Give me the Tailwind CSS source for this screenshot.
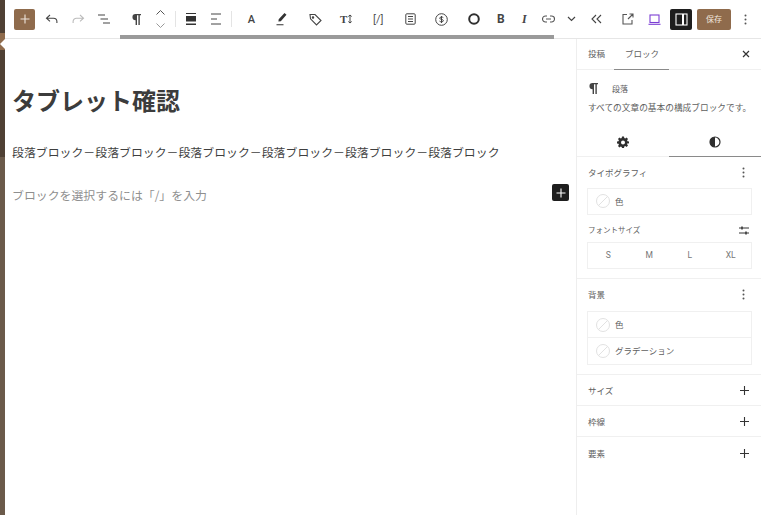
<!DOCTYPE html>
<html lang="ja">
<head>
    <meta charset="UTF-8">
    <meta name="viewport" content="width=device-width, initial-scale=1.0">
    <title>タブレット確認</title>
    <script src="https://cdn.jsdelivr.net/npm/@tailwindcss/browser@4"></script>
</head>
<body class="overflow-hidden bg-white">
<div class="relative flex h-[515px] w-[761px] font-['Noto_Sans_CJK_JP','Noto_Sans',sans-serif] text-[#3a3a3a] antialiased">
    <!-- admin menu strip -->
    <div class="relative flex h-full w-[5px] shrink-0 flex-col">
        <div class="h-[157px] bg-[#4f4034]"></div>
        <div class="flex-1 bg-[#6b5a4a]"></div>
        <div class="absolute left-0 top-[33px] h-[17px] w-[5px] bg-[#8f6b4c]"></div>
        <div class="absolute left-0 top-[44px] h-0 w-0 -translate-y-1/2 border-y-[5px] border-r-[5px] border-y-transparent border-r-white"></div>
    </div>

    <div class="flex min-w-0 flex-1 flex-col">
        <!-- toolbar -->
        <div class="relative flex h-[39px] items-center border-b border-[#e6e6e6] text-[#3a3a3a]">
            <button class="ml-[9px] flex h-[21px] w-[21px] items-center justify-center rounded-[2px] bg-[#8f6b4c]">
                <svg width="10" height="10" viewBox="0 0 10 10" fill="none" stroke="#efe6dd" stroke-width="1.1"><path d="M5 .5v9M.5 5h9"/></svg>
            </button>
            <svg class="ml-[10px]" width="14" height="12" viewBox="0 0 14 12" fill="none" stroke="#444" stroke-width="1.100"><path d="M5 2 1.500 5.200 5 8.400M1.500 5.200h7a3.400 3.400 0 0 1 3.400 3.400V10"/></svg>
            <svg class="ml-[12px]" width="14" height="12" viewBox="0 0 14 12" fill="none" stroke="#bbb" stroke-width="1.100"><path d="M9 2l3.500 3.200L9 8.400M12.500 5.200h-7a3.400 3.400 0 0 0-3.400 3.400V10"/></svg>
            <svg class="ml-[12px]" width="14" height="12" viewBox="0 0 14 12" fill="none" stroke="#444" stroke-width="1.100"><path d="M1 2h7M3.500 6h7.500M6 10h7"/></svg>

            <svg class="ml-[20px]" width="11" height="13" viewBox="0 0 11 13" fill="#444"><path d="M4.500 1H10v1.300H8.800V12H7.400V2.300H6V12H4.600V7.200A3.100 3.100 0 0 1 4.500 1z"/></svg>
            <div class="ml-[13px] flex h-[20px] flex-col items-center justify-between">
                <svg width="11" height="7" viewBox="0 0 11 7" fill="none" stroke="#555" stroke-width="1"><path d="M1.500 5.500 5.500 1.500l4 4"/></svg>
                <svg width="11" height="7" viewBox="0 0 11 7" fill="none" stroke="#999" stroke-width="1"><path d="M1.500 1.500l4 4 4-4"/></svg>
            </div>
            <div class="ml-[9px] h-[16px] w-px bg-[#e4e4e4]"></div>
            <svg class="ml-[9px]" width="12" height="12" viewBox="0 0 12 12" fill="#333"><path d="M1 0h10v1.100H1zM1 3h10v5.500H1zM1 10.500h10V12H1z"/></svg>
            <svg class="ml-[13px]" width="12" height="12" viewBox="0 0 12 12" fill="none" stroke="#444" stroke-width="1"><path d="M1 1h10M1 6h6M1 11h10"/></svg>
            <div class="ml-[9px] h-[16px] w-px bg-[#e4e4e4]"></div>

            <span class="ml-[15px] w-[9px] text-center font-['Roboto',sans-serif] text-[11px] font-medium leading-none text-[#444]">A</span>
            <svg class="ml-[19px]" width="13" height="14" viewBox="0 0 13 14" fill="#333"><path d="M9.500 1l2 1.800-5.700 6.400-2.400.3.300-2.300zM1.500 12.200h7v1h-7z"/></svg>
            <svg class="ml-[21px]" width="13" height="13" viewBox="0 0 13 13" fill="none" stroke="#444" stroke-width="1.100"><path d="M1 1.500h5l6 6-4.500 4.500-6-6.200z"/><circle cx="4" cy="4.500" r=".7" fill="#444"/></svg>
            <div class="ml-[18px] flex w-[14px] items-center">
                <span class="font-['Liberation_Serif',serif] text-[11px] font-bold leading-none text-[#444]">T</span>
                <svg width="6" height="10" viewBox="0 0 6 10" fill="none" stroke="#444" stroke-width="1"><path d="M3 1v8M1.300 2.500 3 1l1.700 1.500M1.300 7.500 3 9l1.700-1.500"/></svg>
            </div>
            <span class="ml-[19px] w-[14px] whitespace-nowrap font-['Roboto',sans-serif] text-[11px] leading-none text-[#555]">[/]</span>
            <svg class="ml-[18px]" width="11" height="12" viewBox="0 0 11 12" fill="none" stroke="#444" stroke-width="1"><rect x=".8" y=".8" width="9.400" height="10.400" rx="1"/><path d="M3 3.500h5M3 6h5M3 8.500h5"/></svg>
            <svg class="ml-[19px]" width="13" height="13" viewBox="0 0 13 13" fill="none" stroke="#444" stroke-width="1"><circle cx="6.500" cy="6.500" r="5.800"/><path d="M8.300 4.600c-.5-.7-3.600-1-3.600.6 0 1.600 3.700.8 3.700 2.500 0 1.500-3.300 1.400-3.900.4M6.500 3v7"/></svg>
            <svg class="ml-[20px]" width="12" height="12" viewBox="0 0 12 12" fill="none" stroke="#2f2f2f" stroke-width="2"><circle cx="6" cy="6" r="4.800"/></svg>
            <span class="ml-[17px] w-[8px] font-['Roboto',sans-serif] text-[12px] font-bold leading-none text-[#444]">B</span>
            <span class="ml-[17px] w-[5px] font-['Liberation_Serif',serif] text-[12px] font-bold italic leading-none text-[#444]">I</span>
            <svg class="ml-[15px]" width="13" height="8" viewBox="0 0 13 8" fill="none" stroke="#555" stroke-width="1.100"><path d="M5 1H3.500a3 3 0 0 0 0 6H5M8 1h1.500a3 3 0 0 1 0 6H8M4 4h5"/></svg>
            <svg class="ml-[12px]" width="9" height="6" viewBox="0 0 9 6" fill="none" stroke="#444" stroke-width="1.200"><path d="M1 1l3.500 3.500L8 1"/></svg>
            <svg class="ml-[15px]" width="11" height="10" viewBox="0 0 11 10" fill="none" stroke="#444" stroke-width="1.100"><path d="M5 1 1 5l4 4M10 1 6 5l4 4"/></svg>

            <svg class="ml-[20px]" width="12" height="12" viewBox="0 0 12 12" fill="none" stroke="#555" stroke-width="1.100"><path d="M5 1.500H1v9.500h9V7M6 6l5-5M7.500 1H11v3.500"/></svg>
            <svg class="ml-[14px]" width="13" height="11" viewBox="0 0 13 11" fill="none" stroke="#7c3fd4" stroke-width="1.100"><rect x="2" y="1" width="9" height="7.500"/><path d="M.5 10.300h12"/></svg>
            <div class="ml-[9px] flex h-[21px] w-[22px] items-center justify-center rounded-[2px] bg-[#1e1e1e]">
                <svg width="13" height="13" viewBox="0 0 13 13" fill="none" stroke="#fff" stroke-width="1.100"><rect x="1" y="1" width="11" height="11"/><path d="M8 1v11" stroke-width="2"/></svg>
            </div>
            <button class="ml-[5px] h-[21px] w-[34px] rounded-[2px] bg-[#8f6b4c] text-[8px] text-[#efe6dd]">保存</button>
            <svg class="ml-[13px]" width="3" height="11" viewBox="0 0 3 11" fill="#555"><circle cx="1.500" cy="1.500" r="1"/><circle cx="1.500" cy="5.500" r="1"/><circle cx="1.500" cy="9.500" r="1"/></svg>

            <!-- toolbar scrollbar thumb -->
            <div class="absolute bottom-[-1px] left-[115px] h-[4px] w-[434px] bg-[#9a9a9a]"></div>
        </div>

        <div class="flex min-h-0 flex-1">
            <!-- editor canvas -->
            <div class="relative flex-1 pl-[7px]">
                <h1 class="mt-[45px] text-[24px] font-bold leading-[32px] text-[#3c3c3c]">タブレット確認</h1>
                <p class="mt-[26px] whitespace-nowrap text-[11.900px] leading-[20px] text-[#3f3f3f]">段落ブロック－段落ブロック－段落ブロック－段落ブロック－段落ブロック－段落ブロック</p>
                <p class="mt-[23px] text-[11.900px] leading-[20px] text-[#8f8f8f]">ブロックを選択するには「/」を入力</p>
                <button class="absolute left-[547px] top-[145px] flex h-[17px] w-[17px] items-center justify-center rounded-[2px] bg-[#1e1e1e]">
                    <svg width="10" height="10" viewBox="0 0 10 10" fill="none" stroke="#fff" stroke-width="1.100"><path d="M5 .5v9M.5 5h9"/></svg>
                </button>
            </div>

            <!-- sidebar -->
            <aside class="w-[185px] shrink-0 border-l border-[#eeeeee]">
                <div class="flex h-[31px] items-center border-b border-[#f0f0f0] text-[8.500px] text-[#606060]">
                    <span class="mb-[2px] ml-[11px]">投稿</span>
                    <span class="relative ml-[20px] flex h-[31px] items-center pb-[2px]">ブロック<span class="absolute -left-[11px] -right-[10px] bottom-0 h-px bg-[#8a8a8a]"></span></span>
                    <svg class="ml-auto mr-[11px]" width="8" height="8" viewBox="0 0 8 8" fill="none" stroke="#333" stroke-width="1.200"><path d="M1 1l6 6M7 1 1 7"/></svg>
                </div>
                <div class="px-[11px] pt-[12px]">
                    <div class="flex h-[13px] items-center">
                        <svg width="11" height="13" viewBox="0 0 11 13" fill="#444"><path d="M4.500 1H10v1.300H8.800V12H7.400V2.300H6V12H4.600V7.200A3.100 3.100 0 0 1 4.500 1z"/></svg>
                        <span class="ml-[13px] text-[8px] text-[#606060]">段落</span>
                    </div>
                    <p class="mt-[6px] whitespace-nowrap text-[8.700px] leading-[13px] text-[#606060]">すべての文章の基本の構成ブロックです。</p>
                </div>
                <div class="mt-[13px] flex h-[30px] border-b border-[#f0f0f0]">
                    <div class="flex w-[92px] items-center justify-center">
                        <svg width="12" height="12" viewBox="0 0 24 24" fill="#2f2f2f"><path fill-rule="evenodd" d="M14 1h-4l-.6 3.200-1.900.8-2.700-1.800-2.800 2.800L3.800 8.700 3 10.600 0 11v4l3 .5.800 1.900-1.800 2.700 2.800 2.800 2.700-1.800 1.900.8L10 24h4l.6-3.100 1.900-.8 2.700 1.800 2.800-2.800-1.800-2.700.8-1.900L24 15v-4l-3-.4-.8-1.900L22 6l-2.800-2.800-2.700 1.800-1.900-.8zM12 9a4 4 0 1 1 0 8 4 4 0 0 1 0-8z"/></svg>
                    </div>
                    <div class="relative flex flex-1 items-center justify-center">
                        <svg width="12" height="12" viewBox="0 0 12 12"><circle cx="6" cy="6" r="5" fill="#fff" stroke="#2f2f2f" stroke-width="1.200"/><path d="M6 1a5 5 0 0 0 0 10z" fill="#2f2f2f"/></svg>
                        <span class="absolute bottom-[-1px] left-0 right-0 h-px bg-[#8a8a8a]"></span>
                    </div>
                </div>

                <!-- typography -->
                <div class="border-b border-[#f0f0f0] pb-[9px] pl-[10px] pr-[9px]">
                    <div class="flex h-[31px] items-center justify-between pl-px text-[8.500px] text-[#606060]">
                        <span>タイポグラフィ</span>
                        <svg class="mr-[7px]" width="3" height="11" viewBox="0 0 3 11" fill="#555"><circle cx="1.500" cy="1.500" r="1"/><circle cx="1.500" cy="5.500" r="1"/><circle cx="1.500" cy="9.500" r="1"/></svg>
                    </div>
                    <div class="flex h-[27px] items-center border border-[#f0f0f0] pb-px pl-[8px] text-[8.500px] text-[#606060]">
                        <span class="h-[14px] w-[14px] rounded-full border border-[#e2e2e2] bg-[linear-gradient(-45deg,transparent_47%,#e2e2e2_47%,#e2e2e2_53%,transparent_53%)]"></span>
                        <span class="ml-[5px]">色</span>
                    </div>
                    <div class="mt-[6px] flex h-[18px] items-center justify-between pl-px text-[7.500px] text-[#606060]">
                        <span>フォントサイズ</span>
                        <svg class="mr-[3px]" width="10" height="9" viewBox="0 0 10 9" fill="none" stroke="#333" stroke-width="1"><path d="M0 2h10M0 7h10"/><path d="M3 .5v3M7 5.500v3" stroke-width="1.500"/></svg>
                    </div>
                    <div class="mt-[3px] grid h-[27px] grid-cols-4 items-center border border-[#f0f0f0] text-center font-['Roboto',sans-serif] text-[8.500px] text-[#777]">
                        <span>S</span><span>M</span><span>L</span><span>XL</span>
                    </div>
                </div>

                <!-- background -->
                <div class="border-b border-[#f0f0f0] pb-[9px] pl-[10px] pr-[9px]">
                    <div class="flex h-[32px] items-center justify-between pb-[2px] pl-px text-[8.500px] text-[#606060]">
                        <span>背景</span>
                        <svg class="mr-[7px]" width="3" height="11" viewBox="0 0 3 11" fill="#555"><circle cx="1.500" cy="1.500" r="1"/><circle cx="1.500" cy="5.500" r="1"/><circle cx="1.500" cy="9.500" r="1"/></svg>
                    </div>
                    <div class="border border-[#f0f0f0] text-[8.500px] text-[#606060]">
                        <div class="flex h-[26px] items-center border-b border-[#f0f0f0] pl-[8px]">
                            <span class="h-[14px] w-[14px] rounded-full border border-[#e2e2e2] bg-[linear-gradient(-45deg,transparent_47%,#e2e2e2_47%,#e2e2e2_53%,transparent_53%)]"></span>
                            <span class="ml-[5px]">色</span>
                        </div>
                        <div class="flex h-[26px] items-center pb-px pl-[8px]">
                            <span class="h-[14px] w-[14px] rounded-full border border-[#e2e2e2] bg-[linear-gradient(-45deg,transparent_47%,#e2e2e2_47%,#e2e2e2_53%,transparent_53%)]"></span>
                            <span class="ml-[5px]">グラデーション</span>
                        </div>
                    </div>
                </div>

                <div class="flex h-[31px] items-center justify-between border-b border-[#f0f0f0] pl-[11px] pr-[12px] text-[8.500px] text-[#606060]">
                    <span>サイズ</span>
                    <svg width="9" height="9" viewBox="0 0 9 9" stroke="#333" stroke-width="1.100"><path d="M4.500 0v9M0 4.500h9"/></svg>
                </div>
                <div class="flex h-[31px] items-center justify-between border-b border-[#f0f0f0] pl-[11px] pr-[12px] text-[8.500px] text-[#606060]">
                    <span>枠線</span>
                    <svg width="9" height="9" viewBox="0 0 9 9" stroke="#333" stroke-width="1.100"><path d="M4.500 0v9M0 4.500h9"/></svg>
                </div>
                <div class="flex h-[32px] items-center justify-between pl-[11px] pr-[12px] text-[8.500px] text-[#606060]">
                    <span>要素</span>
                    <svg width="9" height="9" viewBox="0 0 9 9" stroke="#333" stroke-width="1.100"><path d="M4.500 0v9M0 4.500h9"/></svg>
                </div>
            </aside>
        </div>
    </div>
</div>
</body>
</html>
